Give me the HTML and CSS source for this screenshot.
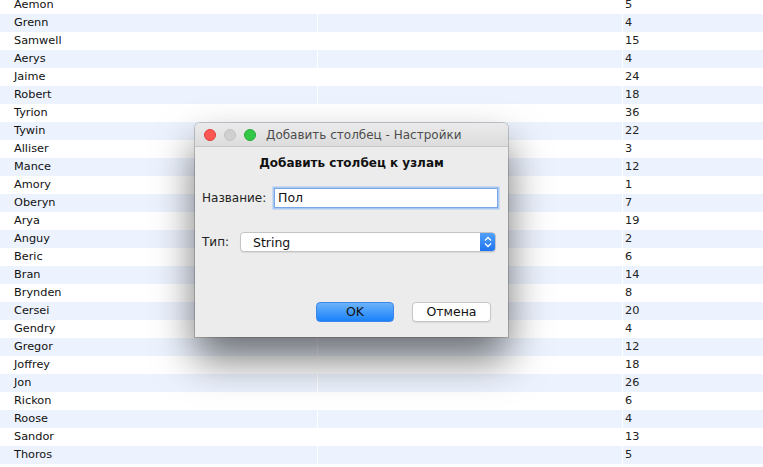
FILE: index.html
```html
<!DOCTYPE html>
<html lang="ru">
<head>
<meta charset="utf-8">
<link rel="stylesheet" href="styles.css">
<title>Таблица</title>
</head>
<body>
<div class="table">
  <div class="row"><div class="c name">Aemon</div><div class="c"></div><div class="c num">5</div></div>
  <div class="row"><div class="c name">Grenn</div><div class="c"></div><div class="c num">4</div></div>
  <div class="row"><div class="c name">Samwell</div><div class="c"></div><div class="c num">15</div></div>
  <div class="row"><div class="c name">Aerys</div><div class="c"></div><div class="c num">4</div></div>
  <div class="row"><div class="c name">Jaime</div><div class="c"></div><div class="c num">24</div></div>
  <div class="row"><div class="c name">Robert</div><div class="c"></div><div class="c num">18</div></div>
  <div class="row"><div class="c name">Tyrion</div><div class="c"></div><div class="c num">36</div></div>
  <div class="row"><div class="c name">Tywin</div><div class="c"></div><div class="c num">22</div></div>
  <div class="row"><div class="c name">Alliser</div><div class="c"></div><div class="c num">3</div></div>
  <div class="row"><div class="c name">Mance</div><div class="c"></div><div class="c num">12</div></div>
  <div class="row"><div class="c name">Amory</div><div class="c"></div><div class="c num">1</div></div>
  <div class="row"><div class="c name">Oberyn</div><div class="c"></div><div class="c num">7</div></div>
  <div class="row"><div class="c name">Arya</div><div class="c"></div><div class="c num">19</div></div>
  <div class="row"><div class="c name">Anguy</div><div class="c"></div><div class="c num">2</div></div>
  <div class="row"><div class="c name">Beric</div><div class="c"></div><div class="c num">6</div></div>
  <div class="row"><div class="c name">Bran</div><div class="c"></div><div class="c num">14</div></div>
  <div class="row"><div class="c name">Brynden</div><div class="c"></div><div class="c num">8</div></div>
  <div class="row"><div class="c name">Cersei</div><div class="c"></div><div class="c num">20</div></div>
  <div class="row"><div class="c name">Gendry</div><div class="c"></div><div class="c num">4</div></div>
  <div class="row"><div class="c name">Gregor</div><div class="c"></div><div class="c num">12</div></div>
  <div class="row"><div class="c name">Joffrey</div><div class="c"></div><div class="c num">18</div></div>
  <div class="row"><div class="c name">Jon</div><div class="c"></div><div class="c num">26</div></div>
  <div class="row"><div class="c name">Rickon</div><div class="c"></div><div class="c num">6</div></div>
  <div class="row"><div class="c name">Roose</div><div class="c"></div><div class="c num">4</div></div>
  <div class="row"><div class="c name">Sandor</div><div class="c"></div><div class="c num">13</div></div>
  <div class="row"><div class="c name">Thoros</div><div class="c"></div><div class="c num">5</div></div>
  <div class="row"><div class="c name"></div><div class="c"></div><div class="c num"></div></div>
</div>

<div class="dialog">
  <div class="titlebar">
    <span class="light red"></span>
    <span class="light gray"></span>
    <span class="light green"></span>
    <span class="title">Добавить столбец - Настройки</span>
  </div>
  <div class="body">
    <div class="heading">Добавить столбец к узлам</div>
    <div class="field name-field">
      <span class="label">Название:</span>
      <div class="input">Пол</div>
    </div>
    <div class="field type-field">
      <span class="label">Тип:</span>
      <div class="select">
        <span class="select-text">String</span>
        <span class="stepper">
          <svg width="16" height="20" viewBox="0 0 16 20">
            <path d="M5 8.5 L8 5.5 L11 8.5" fill="none" stroke="#fff" stroke-width="1.3"/>
            <path d="M5 11.5 L8 14.5 L11 11.5" fill="none" stroke="#fff" stroke-width="1.3"/>
          </svg>
        </span>
      </div>
    </div>
    <div class="buttons">
      <div class="btn ok">OK</div>
      <div class="btn cancel">Отмена</div>
    </div>
  </div>
</div>
</body>
</html>
```

FILE: styles.css
```css
html, body {
  margin: 0;
  padding: 0;
  background: #ffffff;
  overflow: hidden;
}
body {
  width: 763px;
  height: 467px;
  position: relative;
  font-family: "DejaVu Sans", "Noto Sans", sans-serif;
}
.table {
  margin-top: -4px;
  display: flex;
  flex-direction: column;
}
.row {
  display: grid;
  grid-template-columns: 317px 304px 1fr;
  column-gap: 1px;
  height: 18px;
  background: #ffffff;
}
.row:nth-child(even) .c {
  background: #edf3fe;
}
.c {
  font-size: 11.3px;
  line-height: 18px;
  color: #111;
  white-space: nowrap;
}
.name {
  padding-left: 14px;
}
.num {
  padding-left: 2px;
  color: #222;
}

.dialog {
  position: absolute;
  left: 195px;
  top: 123px;
  width: 313px;
  height: 214px;
  background: #ececec;
  border-radius: 5px 5px 0 0;
  box-shadow: 0 22px 40px rgba(0,0,0,0.55), 0 0 0 1px rgba(0,0,0,0.18);
  display: flex;
  flex-direction: column;
  overflow: hidden;
}
.titlebar {
  height: 23px;
  flex: none;
  background: linear-gradient(#ebebeb, #dcdcdc);
  border-bottom: 1px solid #c8c8c8;
  display: flex;
  align-items: center;
  padding-left: 9px;
}
.light {
  width: 12px;
  height: 12px;
  border-radius: 50%;
  margin-right: 8px;
  box-sizing: border-box;
}
.red { background: #fc5753; border: 1px solid #df3e3a; }
.gray { background: #d0d0d0; border: 1px solid #c2c2c2; }
.green { background: #33c748; border: 1px solid #27aa35; }
.title {
  margin-left: 2px;
  font-size: 12px;
  color: #4d4d4d;
  white-space: nowrap;
}
.body {
  flex: 1;
  display: flex;
  flex-direction: column;
  padding: 0 10px 0 7px;
}
.heading {
  margin-top: 9px;
  text-align: center;
  font-weight: bold;
  font-size: 12px;
  color: #111;
  padding-left: 3px;
}
.field {
  display: flex;
  align-items: center;
}
.label {
  font-size: 12px;
  color: #222;
  white-space: nowrap;
}
.name-field {
  margin-top: 18px;
}
.name-field .label {
  width: 72px;
}
.input {
  width: 224px;
  height: 20px;
  box-sizing: border-box;
  background: #fff;
  border: 1px solid #7aa7e6;
  box-shadow: 0 0 0 1.5px #a9c8f2;
  font-size: 12.5px;
  line-height: 18px;
  padding-left: 3px;
  color: #111;
}
.type-field {
  margin-top: 24px;
}
.type-field .label {
  width: 38px;
}
.select {
  width: 256px;
  height: 20px;
  box-sizing: border-box;
  background: #fff;
  border: 1px solid #c4c4c4;
  border-radius: 4px;
  box-shadow: 0 1px 1px rgba(0,0,0,0.08);
  display: flex;
  align-items: center;
  justify-content: space-between;
  overflow: hidden;
}
.select-text {
  padding-left: 12px;
  font-size: 12.5px;
  color: #111;
}
.stepper {
  width: 16px;
  height: 20px;
  margin-right: -1px;
  background: linear-gradient(#55a3fb, #1c72f0);
  display: flex;
}
.buttons {
  margin-top: 50px;
  display: flex;
  justify-content: flex-end;
  gap: 18px;
  padding-right: 7px;
}
.btn {
  height: 20px;
  box-sizing: border-box;
  border-radius: 4px;
  font-size: 12.5px;
  line-height: 18px;
  text-align: center;
  color: #111;
}
.ok {
  width: 78px;
  background: linear-gradient(#6cb3fa, #1a82fb);
  border: 1px solid #3e86e8;
}
.cancel {
  width: 79px;
  background: #fff;
  border: 1px solid #c6c6c6;
  box-shadow: 0 1px 1px rgba(0,0,0,0.08);
}
```
